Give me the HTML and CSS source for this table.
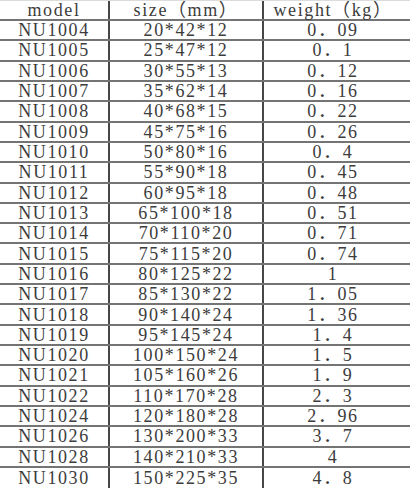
FILE: index.html
```html
<!DOCTYPE html>
<html lang="en">
<head>
<meta charset="utf-8">
<title>NU bearing sizes</title>
<link rel="stylesheet" href="styles.css">
</head>
<body>
<div class="table">
  <div class="row head"><div class="cell c1">model</div><div class="cell c2">size（mm）</div><div class="cell c3">weight（kg）</div></div>
  <div class="row"><div class="cell c1">NU1004</div><div class="cell c2">20*42*12</div><div class="cell c3">0．09</div></div>
  <div class="row"><div class="cell c1">NU1005</div><div class="cell c2">25*47*12</div><div class="cell c3">0．1</div></div>
  <div class="row"><div class="cell c1">NU1006</div><div class="cell c2">30*55*13</div><div class="cell c3">0．12</div></div>
  <div class="row"><div class="cell c1">NU1007</div><div class="cell c2">35*62*14</div><div class="cell c3">0．16</div></div>
  <div class="row"><div class="cell c1">NU1008</div><div class="cell c2">40*68*15</div><div class="cell c3">0．22</div></div>
  <div class="row"><div class="cell c1">NU1009</div><div class="cell c2">45*75*16</div><div class="cell c3">0．26</div></div>
  <div class="row"><div class="cell c1">NU1010</div><div class="cell c2">50*80*16</div><div class="cell c3">0．4</div></div>
  <div class="row"><div class="cell c1">NU1011</div><div class="cell c2">55*90*18</div><div class="cell c3">0．45</div></div>
  <div class="row"><div class="cell c1">NU1012</div><div class="cell c2">60*95*18</div><div class="cell c3">0．48</div></div>
  <div class="row"><div class="cell c1">NU1013</div><div class="cell c2">65*100*18</div><div class="cell c3">0．51</div></div>
  <div class="row"><div class="cell c1">NU1014</div><div class="cell c2">70*110*20</div><div class="cell c3">0．71</div></div>
  <div class="row"><div class="cell c1">NU1015</div><div class="cell c2">75*115*20</div><div class="cell c3">0．74</div></div>
  <div class="row"><div class="cell c1">NU1016</div><div class="cell c2">80*125*22</div><div class="cell c3">1</div></div>
  <div class="row"><div class="cell c1">NU1017</div><div class="cell c2">85*130*22</div><div class="cell c3">1．05</div></div>
  <div class="row"><div class="cell c1">NU1018</div><div class="cell c2">90*140*24</div><div class="cell c3">1．36</div></div>
  <div class="row"><div class="cell c1">NU1019</div><div class="cell c2">95*145*24</div><div class="cell c3">1．4</div></div>
  <div class="row"><div class="cell c1">NU1020</div><div class="cell c2">100*150*24</div><div class="cell c3">1．5</div></div>
  <div class="row"><div class="cell c1">NU1021</div><div class="cell c2">105*160*26</div><div class="cell c3">1．9</div></div>
  <div class="row"><div class="cell c1">NU1022</div><div class="cell c2">110*170*28</div><div class="cell c3">2．3</div></div>
  <div class="row"><div class="cell c1">NU1024</div><div class="cell c2">120*180*28</div><div class="cell c3">2．96</div></div>
  <div class="row"><div class="cell c1">NU1026</div><div class="cell c2">130*200*33</div><div class="cell c3">3．7</div></div>
  <div class="row"><div class="cell c1">NU1028</div><div class="cell c2">140*210*33</div><div class="cell c3">4</div></div>
  <div class="row last"><div class="cell c1">NU1030</div><div class="cell c2">150*225*35</div><div class="cell c3">4．8</div></div>
</div>
</body>
</html>
```
FILE: styles.css
```css
html, body {
  margin: 0;
  padding: 0;
  background: #ffffff;
}
.table {
  width: 410px;
  font-family: "Liberation Serif", "Noto Sans CJK SC", serif;
  font-size: 18px;
  letter-spacing: 1.6px;
  color: #3c3c3c;
}
.row {
  display: grid;
  grid-template-columns: 110px 154px 146px;
  box-sizing: border-box;
  height: 20.32px;
  border-bottom: 2px solid #747474;
}
.row.head {
  height: 21px;
  border-top: 1px solid #dcdcdc;
}
.row.last {
  border-bottom: none;
  height: 20px;
}
.cell {
  display: flex;
  align-items: center;
  justify-content: center;
  line-height: 1;
  white-space: nowrap;
}
.c1, .c2 {
  border-right: 2px solid #474747;
}
.c3 {
  padding-right: 8px;
}
```
